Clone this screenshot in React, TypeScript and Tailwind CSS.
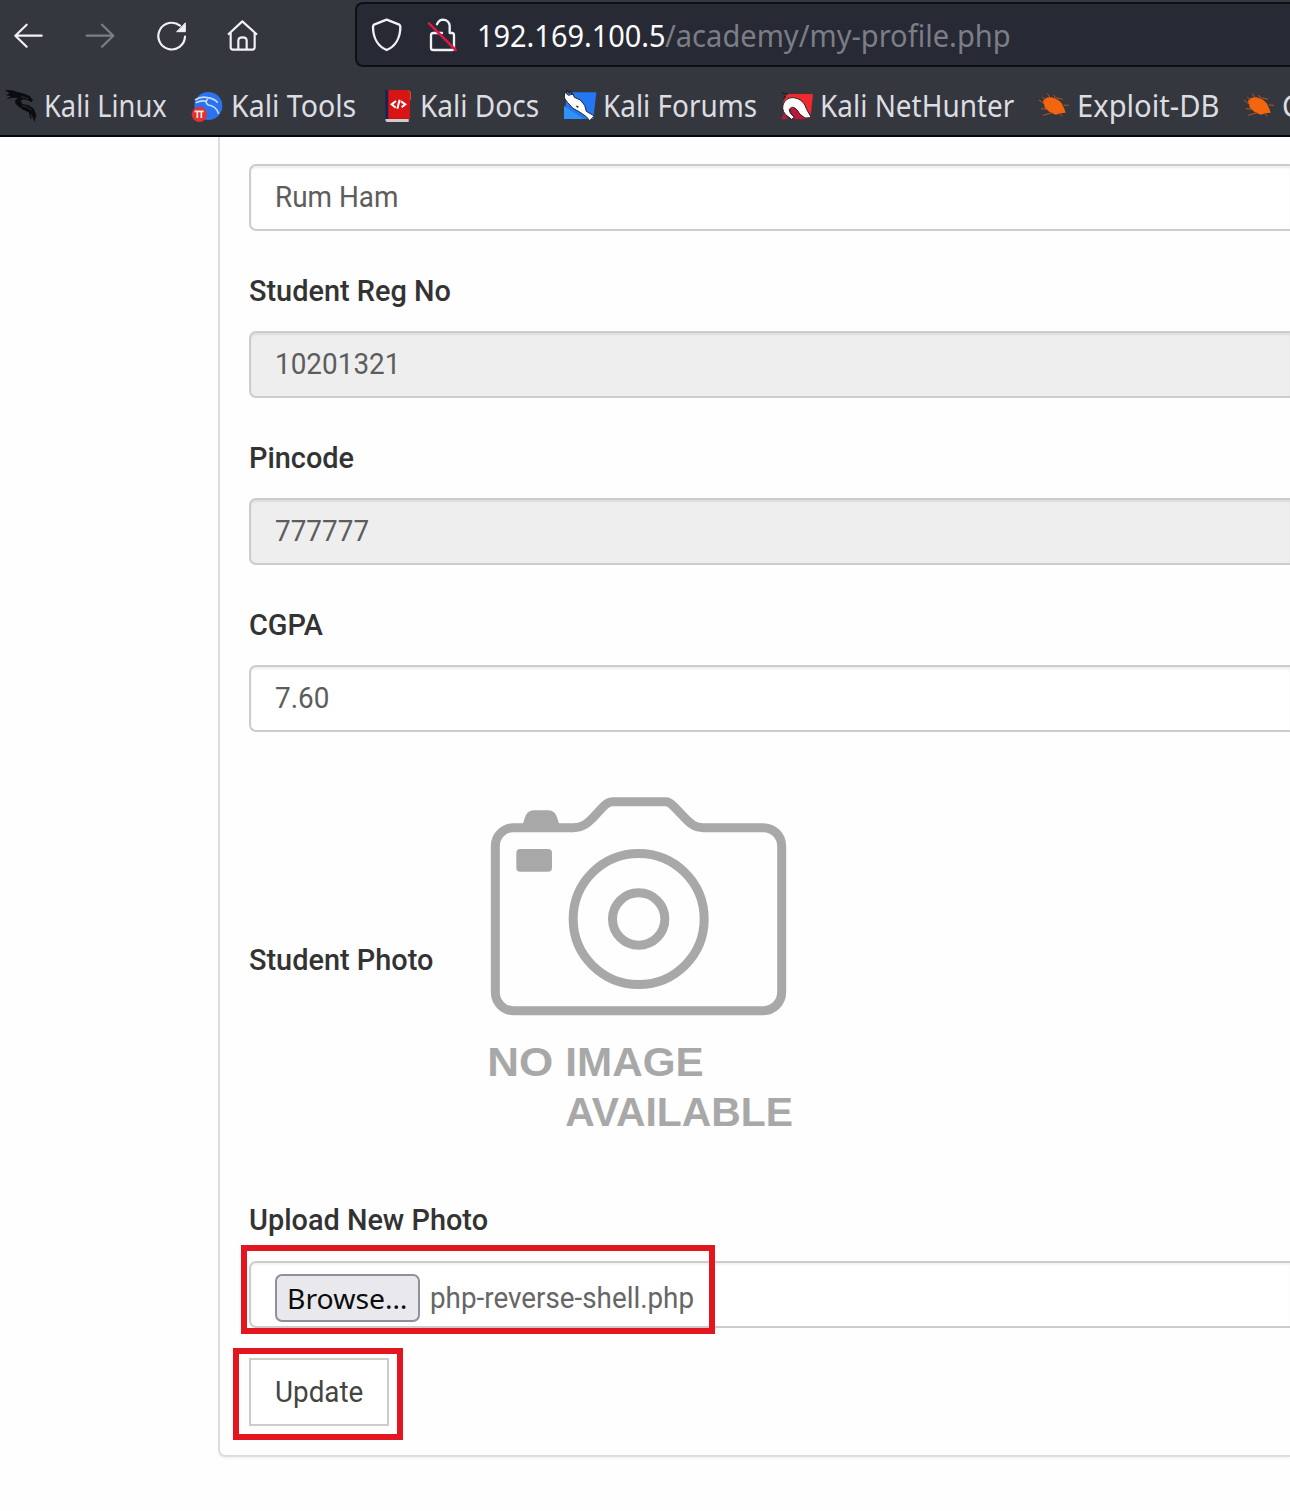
import type { ReactNode } from 'react'

function DragonIcon() {
  return (
    <svg className="block h-9 w-9 shrink-0" viewBox="8 264 108 108">
      <path d="M14 270 L34 271 L52 276 L72 281 L88 288 L98 301 L94 306 L82 301 L70 298 L61 302 L66 312 L86 316 L100 326 L108 344 L102 366 L98 354 L92 342 L78 331 L60 324 L46 312 L44 302 L52 293 L36 293 L18 298 L32 288 L16 286 L28 280 Z" fill="#0b0c0f" />
      <path d="M56 283 L76 292 M66 326 L84 334 M86 332 L92 356" stroke="#0b0c0f" strokeWidth="4" fill="none" />
      <path d="M62 290 Q74 291 84 297 M64 317 Q84 319 94 330" stroke="#34363e" strokeWidth="2.5" fill="none" />
    </svg>
  )
}

function ToolsIcon() {
  return (
    <svg className="block h-9 w-9 shrink-0" viewBox="569 264 108 108">
      <circle cx="624" cy="318" r="42" fill="#2a72ee" />
      <path d="M584 300 Q602 288 622 293 Q644 297 652 308 M586 308 Q604 300 618 304 M622 297 Q612 308 624 315 Q648 318 655 342" stroke="#c2dcfb" strokeWidth="5" fill="none" />
      <circle cx="597" cy="343" r="23" fill="#e2322f" />
      <path d="M583 334 H610 M591 334 V354 M603 334 V354" stroke="#fbe9e9" strokeWidth="5" fill="none" />
    </svg>
  )
}

function DocsIcon() {
  return (
    <svg className="block h-9 w-9 shrink-0" viewBox="85 264 108 108">
      <path d="M104 270 H114 V358 H104 Z" fill="#1d2252" />
      <path d="M113 270 H172 Q178 270 178 276 V356 H113 Z" fill="#d91414" />
      <path d="M173 272 L179 276 V300" stroke="#c8641c" strokeWidth="3" fill="none" />
      <path d="M104 357 H174 V366 H108 Q104 366 104 357 Z" fill="#d8c9c9" />
      <path d="M136 303 L123 313 L135 323 M147 299 L140 326 M151 304 L164 313 L153 322" stroke="#fff" strokeWidth="6" fill="none" />
    </svg>
  )
}

function ForumsIcon() {
  return (
    <svg className="block h-9 w-9 shrink-0" viewBox="635 264 108 108">
      <path d="M650 277 H738 L729 357 H641 Z" fill="#2377f2" />
      <path d="M641 318 L641 357 H700 Z" fill="#2f93f5" />
      <path d="M643 276 L654 286 L668 282 L672 292 L690 300 L703 316 L708 334 L732 348 L726 354 L718 362 L708 350 L688 336 L668 325 L652 308 L642 294 Z" fill="#fdfdfd" stroke="#25262c" strokeWidth="3" />
      <path d="M648 268 L658 280 M658 272 L668 284 M678 318 L684 322" stroke="#25262c" strokeWidth="4" />
    </svg>
  )
}

function NetHunterIcon() {
  return (
    <svg className="block h-9 w-9 shrink-0" viewBox="236 264 108 108">
      <path d="M258 282 H338 L331 350 L290 340 L247 310 Z" fill="#ee2a2e" />
      <path d="M243 358 L252 336 L262 358 Z M282 322 L331 340 V352 L322 358 H284 L270 332 Z" fill="#c01638" />
      <path d="M244 277 L262 284 M250 296 L256 288" stroke="#1e1f25" strokeWidth="4" />
      <path d="M256 344 Q240 326 252 306 Q266 286 292 296 Q312 304 318 326 L333 353 L314 354 L298 342 Q288 322 276 322 Q260 326 272 342 L282 352 L274 358 Z" fill="#fbfbfb" stroke="#2b2024" strokeWidth="3" />
    </svg>
  )
}

function BugIcon() {
  return (
    <svg className="block h-9 w-9 shrink-0" viewBox="45 264 108 108">
      <path d="M66 304 Q72 290 92 292 L112 300 L122 310 L130 326 L134 338 L120 340 L104 344 L86 336 L72 324 Z" fill="#f4650f" />
      <path d="M54 300 L72 314 M64 291 L76 302 M79 281 L88 294 M98 285 L104 296 M104 293 L126 298 M60 326 L80 328 M66 346 L94 338 M128 315 L144 316 M116 338 L123 349" stroke="#b6541d" strokeWidth="3" fill="none" />
    </svg>
  )
}

function Bookmark({ icon, label, box, scale }: { icon: ReactNode; label: string; box: string; scale: string }) {
  return (
    <div className={`flex shrink-0 items-center ${box}`}>
      {icon}
      <span className={`ml-[5px] inline-block origin-left text-[30px] leading-9 whitespace-nowrap ${scale}`}>{label}</span>
    </div>
  )
}

function Field({ value, readOnly = false }: { value: string; readOnly?: boolean }) {
  return (
    <div
      className={`flex h-[67px] items-center rounded-l-[7px] border-2 border-r-0 border-[#cccccc] pb-px pl-6 shadow-[inset_0_2px_2px_rgba(0,0,0,0.07)] ${readOnly ? 'bg-[#eeeeee]' : 'bg-white'}`}
    >
      <span className="inline-block origin-left scale-x-[.93] text-[30px] leading-none whitespace-nowrap text-[#5d5d5d]">{value}</span>
    </div>
  )
}

function Label({ children }: { children: ReactNode }) {
  return <div className="origin-left scale-x-[.996] text-[29px] leading-10 font-medium whitespace-nowrap text-[#333]">{children}</div>
}

function NoImage() {
  return (
    <svg className="block h-[370px] w-[340px]" viewBox="0 0 1020 1110">
      <g fill="none" stroke="#a8a8a8" strokeWidth="27">
        <path d="M130 143 H310 C338 143 352 130 370 112 L398 82 Q413 65 428 65 H588 Q598 65 610 78 L643 112 C662 132 675 143 700 143 H880 A55 55 0 0 1 935 198 V637 A55 55 0 0 1 880 692 H130 A54 55 0 0 1 76 637 V198 A54 55 0 0 1 130 143 Z" />
        <circle cx="506" cy="417" r="196.5" />
        <circle cx="506" cy="417" r="78.5" />
      </g>
      <path d="M154 140 Q160 132 163 118 Q169 91 192 91 H234 Q257 91 263 118 Q266 132 272 140 Z" fill="#a8a8a8" />
      <rect x="139" y="207" width="107" height="68" rx="12" fill="#a8a8a8" />
      <g fill="#a8a8a8" fontFamily="Liberation Sans, sans-serif" fontWeight="700" fontSize="124">
        <text x="52" y="889" textLength="198" lengthAdjust="spacingAndGlyphs">NO</text>
        <text x="286" y="889" textLength="415" lengthAdjust="spacingAndGlyphs">IMAGE</text>
        <text x="286" y="1038" textLength="683" lengthAdjust="spacingAndGlyphs">AVAILABLE</text>
      </g>
    </svg>
  )
}

export default function App() {
  return (
    <div className="flex h-[1511px] w-[1290px] flex-col overflow-hidden bg-[#fefefe] font-['Roboto',sans-serif]">
      <header className="flex h-[137px] shrink-0 flex-col border-b-2 border-[#08090c] bg-[#35373f] font-['Noto_Sans',sans-serif]">
        <div className="flex h-[69px] shrink-0 items-start pt-[2px]">
          <svg className="h-[66px] w-[355px] shrink-0" viewBox="0 6 1065 198" fill="none" stroke="#f2f2f5" strokeWidth="6.5" strokeLinecap="round" strokeLinejoin="round">
            <path d="M125 107 H46 M80 74 L46 107 L80 140" />
            <path d="M260 107 H340 M306 74 L340 107 L306 140" stroke="#7c7e86" />
            <path d="M540 77 A40 40 0 1 0 555 110" />
            <path d="M556 70 V95 H531 Z" fill="#f2f2f5" strokeWidth="3" />
            <path d="M686 102 L727 64 L769 102 M692 98 V142 Q692 149 699 149 H757 Q764 149 764 142 V98 M715 148 V122 Q715 112 728 112 Q740 112 740 122 V148" />
          </svg>
          <div className="flex h-[65px] flex-1 items-center rounded-l-lg border-2 border-r-0 border-[#0e1017] bg-[#272a34]">
            <svg className="ml-[10px] h-[60px] w-[100px] shrink-0" viewBox="51 14 300 180" fill="none" stroke="#f2f2f5" strokeWidth="7" strokeLinecap="round" strokeLinejoin="round">
              <path d="M110 58 L148 73 Q151 75 151 79 C151 112 136 138 110 149 C84 138 69 112 69 79 Q69 75 72 73 Z" />
              <path d="M261 72 Q267 58 280 58 Q297 60 299 76 V98 H306 Q312 98 312 105 V142 Q312 149 305 149 H250 Q243 149 243 142 V105 Q243 98 250 98 H276" />
              <path d="M237 69 L317 149" stroke="#df1746" strokeWidth="7.5" />
            </svg>
            <div className="ml-[10px] w-[188px] shrink-0">
              <span className="inline-block origin-left scale-x-[.948] text-[30.5px] leading-10 whitespace-nowrap text-[#fbfbfe]">192.169.100.5</span>
            </div>
            <span className="inline-block origin-left scale-x-[.953] text-[30.5px] leading-10 whitespace-nowrap text-[#7b7d87]">/academy/my-profile.php</span>
          </div>
        </div>
        <div className="flex h-[66px] items-start overflow-hidden pt-[19px] pl-[3px] text-[#dcdde1]">
          <Bookmark icon={<DragonIcon />} label="Kali Linux" box="w-[187px]" scale="scale-x-[.908]" />
          <Bookmark icon={<ToolsIcon />} label="Kali Tools" box="w-[189px]" scale="scale-x-[.951]" />
          <Bookmark icon={<DocsIcon />} label="Kali Docs" box="w-[183px]" scale="scale-x-[.935]" />
          <Bookmark icon={<ForumsIcon />} label="Kali Forums" box="w-[217px]" scale="scale-x-[.93]" />
          <Bookmark icon={<NetHunterIcon />} label="Kali NetHunter" box="w-[257px]" scale="scale-x-[.931]" />
          <Bookmark icon={<BugIcon />} label="Exploit-DB" box="w-[205px]" scale="scale-x-[.972]" />
          <Bookmark icon={<BugIcon />} label="G" box="w-[49px]" scale="scale-x-[.95]" />
        </div>
      </header>

      <main className="ml-[218px] h-[1320px] shrink-0 rounded-bl-[7px] border-b-2 border-l-2 border-[#dddddd] bg-[#fefefe] pt-[27px] pl-[29px] shadow-[0_2px_2px_rgba(0,0,0,0.04)]">
        <Field value="Rum Ham" />
        <div className="mt-10 mb-5">
          <Label>Student Reg No</Label>
        </div>
        <Field value="10201321" readOnly />
        <div className="mt-10 mb-5">
          <Label>Pincode</Label>
        </div>
        <Field value="777777" readOnly />
        <div className="mt-10 mb-5">
          <Label>CGPA</Label>
        </div>
        <Field value="7.60" />
        <div className="mt-12 flex h-[370px] items-center">
          <div className="-mt-[11px] w-[221px]">
            <Label>Student Photo</Label>
          </div>
          <NoImage />
        </div>
        <div className="mt-[50px] mb-[21px]">
          <Label>Upload New Photo</Label>
        </div>
        <div className="relative flex h-[67px] items-center rounded-l-[7px] border-2 border-r-0 border-[#cccccc] bg-white pl-6 shadow-[inset_0_2px_2px_rgba(0,0,0,0.05)]">
          <button className="mt-[7px] flex h-12 w-[145px] shrink-0 items-center rounded-[7px] border-2 border-[#8f8f9d] bg-[#e9e9ed] pl-[10px] font-['Noto_Sans',sans-serif]">
            <span className="inline-block origin-left scale-x-[1.05] text-[27px] leading-none whitespace-nowrap text-[#0c0c0c]">Browse…</span>
          </button>
          <span className="mt-[7px] ml-[10px] inline-block origin-left scale-x-[.959] text-[29px] leading-none whitespace-nowrap text-[#666]">php-reverse-shell.php</span>
          <div className="pointer-events-none absolute -top-[18px] -left-[10px] h-[89px] w-[474px] border-6 border-[#e3151f]" />
        </div>
        <div className="relative mt-[30px] flex h-[68px] w-[140px] items-center border-2 border-[#cccccc] bg-white pl-6">
          <span className="inline-block origin-left scale-x-[.959] text-[29px] leading-none whitespace-nowrap text-[#444]">Update</span>
          <div className="pointer-events-none absolute -top-[12px] -left-[18px] h-[92px] w-[170px] border-6 border-[#e3151f]" />
        </div>
      </main>
    </div>
  )
}
